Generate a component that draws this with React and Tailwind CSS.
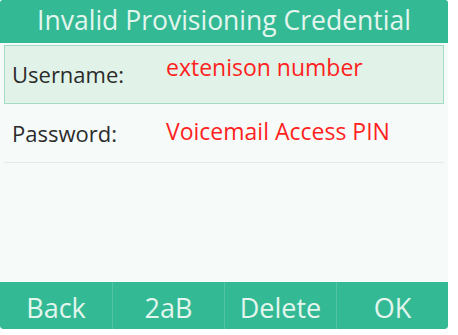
import React from 'react';

const keys = ['Back', '2aB', 'Delete', 'OK'];

const fields = [
  { label: 'Username:', value: 'extenison number', active: true },
  { label: 'Password:', value: 'Voicemail Access PIN', active: false },
];

export default function App() {
  return (
    <div className="w-[458px] h-[335px] bg-white" style={{ fontFamily: '"Open Sans", "DejaVu Sans", sans-serif' }}>
      <div className="w-[448px] h-[329px] flex flex-col bg-[#f6fbf9] rounded-b-[3px] overflow-hidden">
        {/* title */}
        <div className="h-[43px] bg-[#34b995] rounded-t-[3px] flex items-center justify-center text-[#e3f6ee] text-[26.5px] leading-none pb-[2px]">
          Invalid Provisioning Credential
        </div>

        {/* fields */}
        <div className="flex-1 px-[4px] pt-[2px]">
          {fields.map(f => (
            <div
              key={f.label}
              className={`h-[59px] flex items-start ${f.active ? 'border border-[#a3dbc8] bg-[#e1f3e8] pl-[7px]' : 'border-b border-[#e3ebe8] pl-[8px]'}`}
            >
              <span className={`w-[154px] shrink-0 leading-none text-[#2c2c2c] text-[22px] ${f.active ? 'pt-[17px]' : 'pt-[18px]'}`}>{f.label}</span>
              <span className={`leading-none text-[#ff1f1f] text-[23px] ${f.active ? 'pt-[10px]' : 'pt-[16px]'}`}>{f.value}</span>
            </div>
          ))}
        </div>

        {/* softkeys */}
        <div className="h-[47px] bg-[#34b995] grid grid-cols-4 rounded-b-[3px]">
          {keys.map((k, i) => (
            <div key={k} className={`flex items-center justify-center pt-[3px] text-[#e3f6ee] text-[27px] leading-none ${i > 0 ? 'border-l border-[#52c4a5]' : ''}`}>
              {k}
            </div>
          ))}
        </div>
      </div>
    </div>
  );
}
